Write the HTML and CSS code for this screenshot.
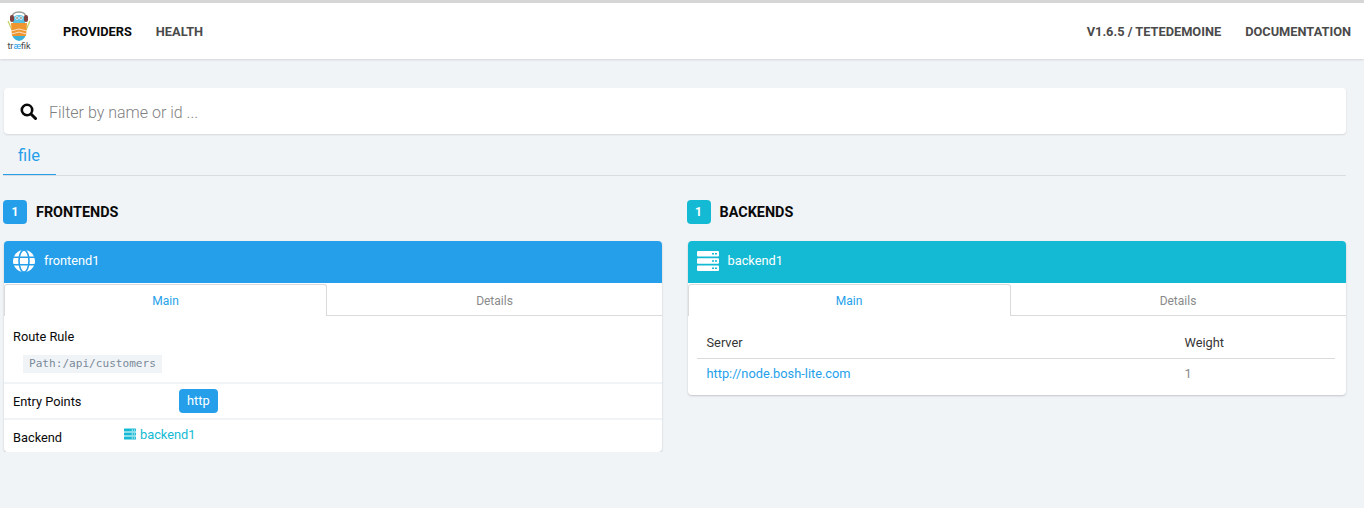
FILE: index.html
```html
<!DOCTYPE html>
<html>
<head>
    <title>Traefik</title>
    <meta charset="utf-8">
    <link rel="stylesheet" href="styles.css">
</head>
<body>

    <!-- top navigation -->
    <nav class="navbar">
        <div class="brand">
            <svg class="brand-gopher" width="26" height="31" viewBox="0 0 26 31">
                <path d="M2 10 L6 19 M24 10 L20 19" stroke="#c9d36a" stroke-width="1.3" fill="none"/>
                <path d="M6 21 Q6 29 13 30 Q20 29 20 21 Z" fill="#3fb1d8"/>
                <path d="M7 9 Q7 4 13 4 Q19 4 19 9 V13 H7 Z" fill="#5cc0e0"/>
                <path d="M6 7 Q6 1 13 1 Q20 1 20 7" stroke="#9c9c9c" stroke-width="1.4" fill="none"/>
                <rect x="4" y="4" width="4" height="7" rx="2" fill="#7d3f3f"/>
                <rect x="18" y="4" width="4" height="7" rx="2" fill="#7d3f3f"/>
                <circle cx="11" cy="7" r="1.7" fill="#fff"/>
                <circle cx="15" cy="7" r="1.7" fill="#fff"/>
                <circle cx="11" cy="7" r="0.7" fill="#222"/>
                <circle cx="15" cy="7" r="0.7" fill="#222"/>
                <path d="M5 12 H21 L20 25 H6 Z" fill="#f0962e"/>
                <path d="M5 20 L13 18 L21 20 M5.5 23 L13 21 L20.5 23" stroke="#f6dcc0" stroke-width="1.1" fill="none"/>
            </svg>
            <div class="brand-name">tr<span class="brand-ae">æ</span>fik</div>
        </div>
        <a class="nav-link nav-active" href="#">PROVIDERS</a>
        <a class="nav-link" href="#">HEALTH</a>
        <div class="nav-right">
            <a class="nav-link" href="#">V1.6.5 / TETEDEMOINE</a>
            <a class="nav-link" href="#">DOCUMENTATION</a>
        </div>
    </nav>

    <main class="content">

        <!-- search -->
        <div class="search">
            <svg class="search-icon" width="17" height="17" viewBox="0 0 17 17">
                <circle cx="7" cy="7" r="5.2" fill="none" stroke="#0a0a0a" stroke-width="2.6"/>
                <path d="M11 11 L15.5 15.5" stroke="#0a0a0a" stroke-width="3" stroke-linecap="round"/>
            </svg>
            <input class="search-input" type="text" placeholder="Filter by name or id ...">
        </div>

        <!-- provider tabs -->
        <div class="providers">
            <a class="provider-tab" href="#">file</a>
        </div>

        <div class="columns">

            <!-- FRONTENDS -->
            <section class="column">
                <h2 class="section-title"><span class="count count-blue">1</span>FRONTENDS</h2>
                <div class="card">
                    <div class="card-head head-blue">
                        <svg width="22" height="22" viewBox="0 0 22 22">
                            <circle cx="11" cy="11" r="11" fill="#fff"/>
                            <g stroke="#259fea" stroke-width="1.6" fill="none">
                                <ellipse cx="11" cy="11" rx="5" ry="11"/>
                                <path d="M0 7.3 H22 M0 14.7 H22"/>
                            </g>
                        </svg>
                        <span class="card-name">frontend1</span>
                    </div>
                    <div class="card-tabs">
                        <a class="card-tab tab-on" href="#">Main</a>
                        <a class="card-tab" href="#">Details</a>
                    </div>
                    <div class="row row-route">
                        <div class="row-label">Route Rule</div>
                        <code class="rule">Path:/api/customers</code>
                    </div>
                    <div class="row row-entry">
                        <div class="row-label label-wide">Entry Points</div>
                        <span class="tag">http</span>
                    </div>
                    <div class="row row-backend">
                        <div class="row-label label-narrow">Backend</div>
                        <a class="backend-link" href="#">
                            <svg width="12" height="12" viewBox="0 0 22 22">
                                <g fill="#14bad4">
                                    <rect y="1" width="22" height="5.5" rx="1"/>
                                    <rect y="8.2" width="22" height="5.5" rx="1"/>
                                    <rect y="15.5" width="22" height="5.5" rx="1"/>
                                </g>
                                <g fill="#fff">
                                    <rect x="14" y="3" width="2.5" height="1.6"/>
                                    <rect x="18" y="3" width="2.5" height="1.6"/>
                                    <rect x="14" y="10.2" width="2.5" height="1.6"/>
                                    <rect x="18" y="10.2" width="2.5" height="1.6"/>
                                    <rect x="14" y="17.5" width="2.5" height="1.6"/>
                                    <rect x="18" y="17.5" width="2.5" height="1.6"/>
                                </g>
                            </svg>backend1
                        </a>
                    </div>
                </div>
            </section>

            <!-- BACKENDS -->
            <section class="column">
                <h2 class="section-title"><span class="count count-teal">1</span>BACKENDS</h2>
                <div class="card">
                    <div class="card-head head-teal">
                        <svg width="22" height="22" viewBox="0 0 22 22">
                            <g fill="#fff">
                                <rect y="1" width="22" height="5.5" rx="1"/>
                                <rect y="8.2" width="22" height="5.5" rx="1"/>
                                <rect y="15.5" width="22" height="5.5" rx="1"/>
                            </g>
                            <g fill="#14bad4">
                                <rect x="15" y="3" width="2" height="1.5"/>
                                <rect x="18" y="3" width="2" height="1.5"/>
                                <rect x="15" y="10.2" width="2" height="1.5"/>
                                <rect x="18" y="10.2" width="2" height="1.5"/>
                                <rect x="15" y="17.5" width="2" height="1.5"/>
                                <rect x="18" y="17.5" width="2" height="1.5"/>
                            </g>
                        </svg>
                        <span class="card-name">backend1</span>
                    </div>
                    <div class="card-tabs">
                        <a class="card-tab tab-on" href="#">Main</a>
                        <a class="card-tab" href="#">Details</a>
                    </div>
                    <table class="servers">
                        <tr>
                            <th class="col-server">Server</th>
                            <th>Weight</th>
                        </tr>
                        <tr>
                            <td><a href="#">http://node.bosh-lite.com</a></td>
                            <td class="weight">1</td>
                        </tr>
                    </table>
                </div>
            </section>

        </div>
    </main>

</body>
</html>
```

FILE: styles.css
```css
/* GLOBAL THEME */
body {
    margin: 0;
    background-color: #f1f4f7;
    color: #0a0a0a;
    font-family: Roboto, "Liberation Sans", sans-serif;
    font-size: 12.8px;
}

a { text-decoration: none; }

/* NAVBAR */
.navbar {
    display: flex;
    align-items: center;
    height: 56px;
    padding: 0 13px 0 6px;
    background-color: #fff;
    border-top: 3px solid #d6d6d6;
    box-shadow: 0 1px 2px rgba(10, 10, 10, 0.12);
}

.brand { width: 26px; margin-right: 31px; text-align: center; }
.brand-gopher { display: block; }
.brand-name { font-size: 9px; line-height: 9px; color: #444; }
.brand-ae { color: #259fea; }

.nav-link {
    margin-left: 24px;
    color: #4a4a4a;
    font-size: 12.8px;
    font-weight: 700;
}
.navbar > .nav-link:first-of-type { margin-left: 0; }
.nav-active { color: #0a0a0a; }
.nav-right { margin-left: auto; display: flex; }

/* PAGE */
.content { padding: 29px 18px 0 3px; }

/* SEARCH */
.search {
    display: flex;
    align-items: center;
    height: 46px;
    margin-left: 1px;
    padding-left: 16px;
    background-color: #fff;
    border-radius: 4px;
    box-shadow: 0 1px 2px rgba(10, 10, 10, 0.12);
}
.search-input {
    flex: 1;
    margin-left: 12px;
    padding: 2px 0 0;
    border: none;
    outline: none;
    background: none;
    font-family: inherit;
    font-size: 16px;
    font-weight: 300;
}
.search-input::placeholder { color: #7f7f7f; opacity: 1; }

/* PROVIDER TABS */
.providers {
    display: flex;
    height: 41px;
    border-bottom: 1px solid #d9dde2;
}
.provider-tab {
    width: 53px;
    height: 41px;
    margin-bottom: -1px;
    box-sizing: border-box;
    padding: 11px 0 0 15px;
    border-bottom: 1px solid #259fea;
    color: #259fea;
    font-size: 16.5px;
    line-height: 22px;
}

/* COLUMNS */
.columns { display: flex; gap: 24px; margin-top: 24px; }
.column { width: 660px; }

.section-title {
    display: flex;
    align-items: center;
    height: 24px;
    margin: 0 0 17px;
    font-size: 14.4px;
    font-weight: 700;
}
.count {
    width: 24px;
    height: 24px;
    margin-right: 9px;
    border-radius: 4px;
    color: #fff;
    font-size: 12px;
    font-weight: 700;
    line-height: 24px;
    text-align: center;
}
.count-blue { background-color: #259fea; }
.count-teal { background-color: #14bad4; }

/* CARDS */
.card {
    margin-left: 1px;
    width: 658px;
    background-color: #fff;
    border-radius: 4px;
    box-shadow: 0 1px 2px rgba(10, 10, 10, 0.2);
}
.card-head {
    display: flex;
    align-items: center;
    gap: 9px;
    height: 42px;
    box-sizing: border-box;
    padding: 0 0 2px 9px;
    border-radius: 4px 4px 0 0;
    color: #fff;
}
.card-name { margin-bottom: 2px; }
.head-blue { background-color: #259fea; }
.head-teal { background-color: #14bad4; }

.card-tabs {
    display: flex;
    height: 33px;
    padding-top: 1px;
    box-sizing: border-box;
    background-color: #fff;
}
.card-tab {
    flex: 1;
    color: #8a8a8a;
    font-size: 12px;
    line-height: 33px;
    text-align: center;
    border-top: 1px solid transparent;
    border-bottom: 1px solid #dbdbdb;
}
.tab-on {
    flex: 0 0 323px;
    box-sizing: border-box;
    color: #259fea;
    border: 1px solid #dbdbdb;
    border-bottom: none;
    border-radius: 3px 3px 0 0;
}

/* ROWS */
.row { padding: 0 9px; border-top: 2px solid #f1f4f7; }
.row-route { height: 66px; border-top: none; padding-top: 13px; box-sizing: border-box; }
.row-entry { display: flex; align-items: center; height: 36px; box-sizing: border-box; }
.row-backend { display: flex; height: 34px; box-sizing: border-box; }
.row-label { line-height: 15px; }
.label-wide { width: 166px; }
.label-narrow { width: 111px; padding-top: 10px; }

.rule {
    display: inline-block;
    margin: 11px 0 0 10px;
    padding: 0 6px;
    background-color: #f1f4f7;
    color: #7a8a99;
    font-family: "DejaVu Sans Mono", monospace;
    font-size: 11.1px;
    line-height: 18px;
}
.tag {
    padding: 0 8px;
    border-radius: 4px;
    background-color: #259fea;
    color: #fff;
    font-size: 12.8px;
    line-height: 24px;
}
.backend-link {
    display: flex;
    align-items: center;
    gap: 4px;
    height: 20px;
    margin-top: 4px;
    color: #14bad4;
}

/* SERVERS TABLE */
.servers {
    width: 638px;
    margin: 10px 10px 0 9px;
    border-collapse: collapse;
    font-size: 12.8px;
}
.servers th {
    height: 32px;
    padding: 0 10px;
    border-bottom: 1px solid #dbdbdb;
    color: #363636;
    font-weight: 400;
    text-align: left;
}
.servers td { height: 36px; padding: 0 10px 6px; box-sizing: border-box; }
.servers a { color: #259fea; }
.col-server { width: 458px; }
.weight { color: #8a8a8a; }
```
